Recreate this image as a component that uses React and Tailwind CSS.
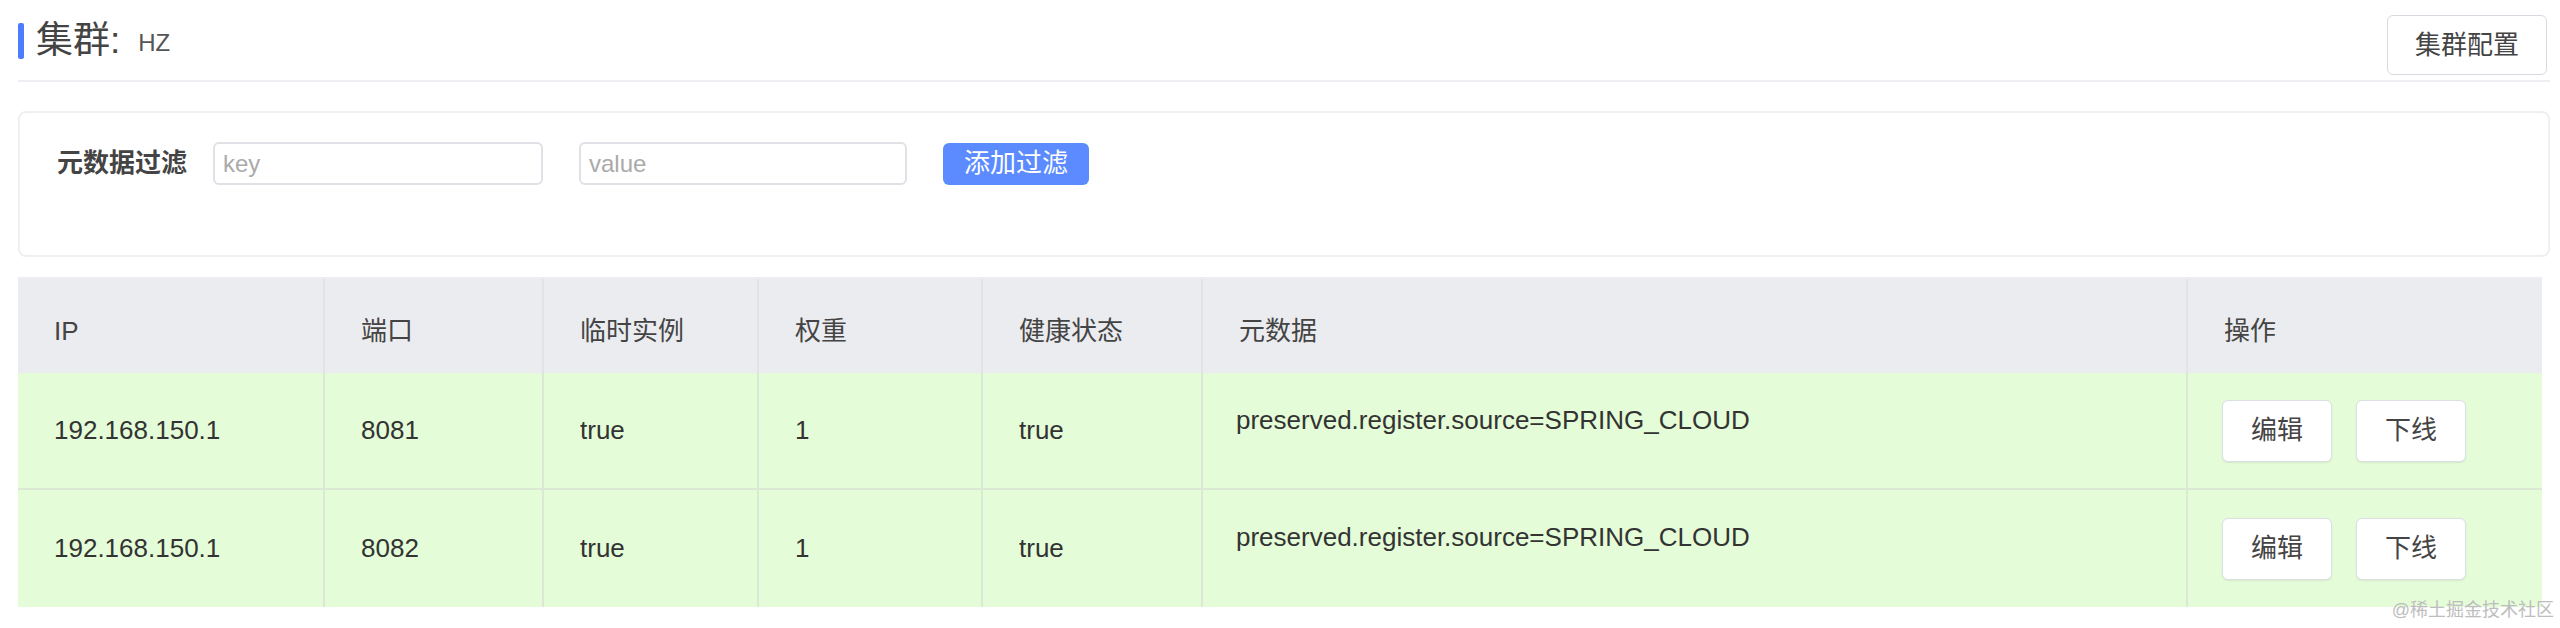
import React from 'react';

const font = { fontFamily: "'Liberation Sans','Noto Sans CJK SC',sans-serif" };

const rows = [
  { ip: '192.168.150.1', port: '8081', ephemeral: 'true', weight: '1', healthy: 'true', meta: 'preserved.register.source=SPRING_CLOUD' },
  { ip: '192.168.150.1', port: '8082', ephemeral: 'true', weight: '1', healthy: 'true', meta: 'preserved.register.source=SPRING_CLOUD' },
];

const headers = ['IP', '端口', '临时实例', '权重', '健康状态', '元数据', '操作'];

const cols = 'grid grid-cols-[307px_219px_215px_224px_220px_985px_1fr]';

const OpButton = ({ children }) => (
  <button className="h-[62px] w-[110px] rounded-[6px] border border-[#dcdfe6] bg-white text-[26px] text-[#444] shadow-[0_1px_2px_rgba(0,0,0,0.08)]">
    {children}
  </button>
);

export default function App() {
  return (
    <div className="relative h-[628px] w-[2560px] overflow-hidden bg-white pl-[18px] pr-[10px] text-[#333]" style={font}>
      {/* title bar */}
      <div className="flex h-[82px] items-start justify-between border-b-2 border-[#eeeff2]">
        <div className="mt-[21px] flex items-end">
          <div className="mb-[2px] h-[36px] w-[6px] rounded-[2px] bg-[#4d7cfe]" />
          <span className="ml-[12px] text-[37px] leading-[40px] text-[#444]">集群:</span>
          <span className="mb-[4px] ml-[18px] text-[24px] leading-[28px] text-[#555]">HZ</span>
        </div>
        <button className="mr-[3px] mt-[15px] h-[60px] w-[160px] rounded-[6px] border border-[#d6d9e0] bg-white text-[26px] text-[#444]">
          集群配置
        </button>
      </div>

      {/* filter */}
      <div className="mt-[29px] h-[146px] rounded-[8px] border-2 border-[#eeeff2] pl-[37px] pt-[29px]">
        <div className="flex items-center">
          <span className="text-[26px] font-bold text-[#444]">元数据过滤</span>
          <input
            placeholder="key"
            className="ml-[26px] h-[43px] w-[330px] rounded-[6px] border-2 border-[#dfe1e6] px-[8px] text-[24px] outline-none placeholder:text-[#aaa]"
          />
          <input
            placeholder="value"
            className="ml-[36px] h-[43px] w-[328px] rounded-[6px] border-2 border-[#dfe1e6] px-[8px] text-[24px] outline-none placeholder:text-[#aaa]"
          />
          <button className="ml-[36px] h-[42px] w-[146px] rounded-[6px] bg-[#5b8bff] text-[26px] text-white">
            添加过滤
          </button>
        </div>
      </div>

      {/* table */}
      <div className="mr-[8px] mt-[20px] border-t-2 border-[#eceef2]">
        <div className={`${cols} h-[94px] bg-[#ebecf0] text-[26px] text-[#444]`}>
          {headers.map((h, i) => (
            <div key={h} className={`flex items-center pl-[36px] pt-[10px] ${i < headers.length - 1 ? 'border-r-2 border-[#e1e3e8]' : ''}`}>
              {h}
            </div>
          ))}
        </div>
        {rows.map((r, idx) => (
          <div key={idx} className={`${cols} h-[117px] bg-[#e4fcd7] text-[26px] text-[#333] ${idx === 0 ? 'border-b-2 border-[#dbe8d3]' : ''}`}>
            {[r.ip, r.port, r.ephemeral, r.weight, r.healthy].map((v, i) => (
              <div key={i} className="flex items-center border-r-2 border-[#dce8d4] pl-[36px]">
                {v}
              </div>
            ))}
            <div className="border-r-2 border-[#dce8d4] pl-[33px] pt-[28px]">{r.meta}</div>
            <div className="flex items-center gap-[24px] pl-[34px]">
              <OpButton>编辑</OpButton>
              <OpButton>下线</OpButton>
            </div>
          </div>
        ))}
      </div>

      <div className="absolute bottom-[4px] right-[6px] text-[18px] text-[#bdbdbd]">@稀土掘金技术社区</div>
    </div>
  );
}
